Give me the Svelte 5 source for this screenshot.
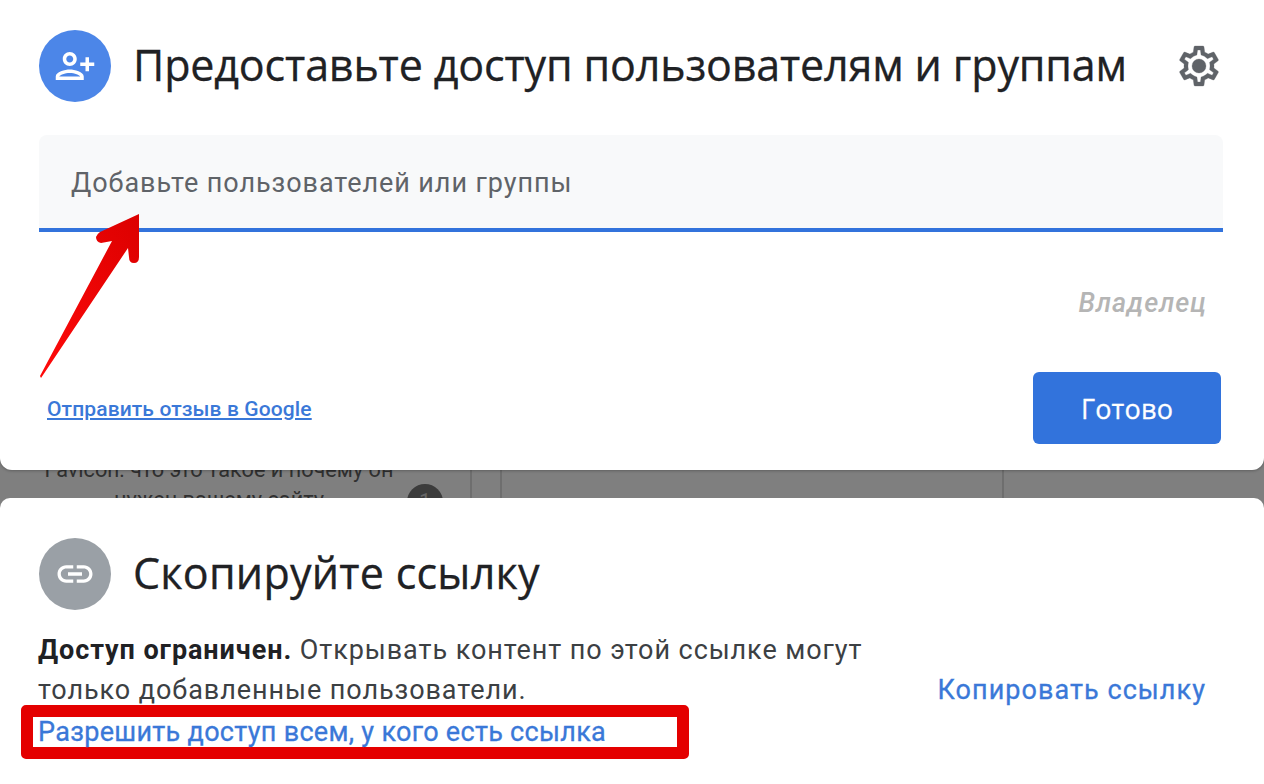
<script>
  const columns = [30, 502, 232];
</script>

<main class="page">
  <section class="card share">
    <header class="head">
      <span class="avatar blue">
        <svg class="person" viewBox="0 0 24 24" width="42" height="42"><path d="M15 12c2.21 0 4-1.79 4-4s-1.79-4-4-4-4 1.79-4 4 1.79 4 4 4zm0-6c1.1 0 2 .9 2 2s-.9 2-2 2-2-.9-2-2 .9-2 2-2zm0 8c-2.67 0-8 1.34-8 4v2h16v-2c0-2.66-5.33-4-8-4zm-6 4c.22-.72 3.31-2 6-2 2.7 0 5.8 1.29 6 2H9zm-3-3v-3h3v-2H6V7H4v3H1v2h3v3h2z" /></svg>
      </span>
      <h1>Предоставьте доступ пользователям и группам</h1>
      <svg class="gear" viewBox="0 0 24 24" width="48" height="48">
        <path d="M19.43 12.98c.04-.32.07-.64.07-.98 0-.34-.03-.66-.07-.98l2.11-1.65c.19-.15.24-.42.12-.64l-2-3.46c-.09-.16-.26-.25-.44-.25-.06 0-.12.01-.17.03l-2.49 1c-.52-.4-1.08-.73-1.69-.98l-.38-2.65C14.46 2.18 14.25 2 14 2h-4c-.25 0-.46.18-.49.42l-.38 2.65c-.61.25-1.17.59-1.69.98l-2.49-1c-.06-.02-.12-.03-.18-.03-.17 0-.34.09-.43.25l-2 3.46c-.13.22-.07.49.12.64l2.11 1.65c-.04.32-.07.65-.07.98 0 .33.03.66.07.98l-2.11 1.65c-.19.15-.24.42-.12.64l2 3.46c.09.16.26.25.44.25.06 0 .12-.01.17-.03l2.49-1c.52.4 1.08.73 1.69.98l.38 2.65c.03.24.24.42.49.42h4c.25 0 .46-.18.49-.42l.38-2.65c.61-.25 1.17-.59 1.69-.98l2.49 1c.06.02.12.03.18.03.17 0 .34-.09.43-.25l2-3.46c.12-.22.07-.49-.12-.64l-2.11-1.65zm-1.98-1.71c.04.31.05.52.05.73 0 .21-.02.43-.05.73l-.14 1.13.89.7 1.08.84-.7 1.21-1.27-.51-1.04-.42-.9.68c-.43.32-.84.56-1.25.73l-1.06.43-.16 1.13-.2 1.35h-1.4l-.19-1.35-.16-1.13-1.06-.43c-.43-.18-.83-.41-1.23-.71l-.91-.7-1.06.43-1.27.51-.7-1.21 1.08-.84.89-.7-.14-1.13c-.03-.31-.05-.54-.05-.74s.02-.43.05-.73l.14-1.13-.89-.7-1.08-.84.7-1.21 1.27.51 1.04.42.9-.68c.43-.32.84-.56 1.25-.73l1.06-.43.16-1.13.2-1.35h1.39l.19 1.35.16 1.13 1.06.43c.43.18.83.41 1.23.71l.91.7 1.06-.43 1.27-.51.7 1.21-1.07.85-.89.7.14 1.13z" />
        <circle cx="12" cy="12" r="3.5" />
      </svg>
    </header>

    <div class="field">Добавьте пользователей или группы</div>
    <div class="owner">Владелец</div>

    <footer class="foot">
      <a href="#feedback" class="feedback">Отправить отзыв в Google</a>
      <button class="done">Готово</button>
    </footer>

    <svg class="arrow" viewBox="0 0 120 180" width="120" height="180">
      <defs>
        <linearGradient id="red" x1="0" y1="1" x2="1" y2="0">
          <stop offset="0" stop-color="#ff0a0a" />
          <stop offset="1" stop-color="#dc0000" />
        </linearGradient>
      </defs>
      <path d="M100 4 L100 47 Q100 53 95 53 Q90 53 90 47 L89 38 L2 168 L1 166 L73 31 L62 33 Q57 32 57 27 Q58 24 61 22 Z" fill="url(#red)" />
    </svg>
  </section>

  <div class="behind">
    <div class="snippet">
      <p>Favicon: что это такое и почему он</p>
      <p>нужен вашему сайту</p>
      <span class="badge">1</span>
    </div>
    {#each columns as width}
      <div class="col" style="width: {width}px"></div>
    {/each}
  </div>

  <section class="card link">
    <header class="head">
      <span class="avatar grey">
        <svg viewBox="0 0 24 24" width="42" height="42"><path d="M3.9 12c0-1.71 1.39-3.1 3.1-3.1h4V7H7c-2.76 0-5 2.24-5 5s2.24 5 5 5h4v-1.9H7c-1.71 0-3.1-1.39-3.1-3.1zM8 13h8v-2H8v2zm9-6h-4v1.9h4c1.71 0 3.1 1.39 3.1 3.1s-1.39 3.1-3.1 3.1h-4V17h4c2.76 0 5-2.24 5-5s-2.24-5-5-5z" /></svg>
      </span>
      <h1>Скопируйте ссылку</h1>
    </header>

    <div class="body">
      <p class="note"><b>Доступ ограничен.</b> Открывать контент по этой ссылке могут только добавленные пользователи.</p>
      <a href="#copy" class="copy">Копировать ссылку</a>
    </div>

    <div class="mark">
      <a href="#allow">Разрешить доступ всем, у кого есть ссылка</a>
    </div>
  </section>
</main>

<style>
  :global(body) {
    margin: 0;
    background: #fff;
  }

  .page {
    width: 1264px;
    height: 784px;
    overflow: hidden;
    background: #7f7f7f;
    font-family: Roboto, "Liberation Sans", sans-serif;
    color: #3c4043;
  }

  .card {
    position: relative;
    z-index: 1;
    background: #fff;
  }

  .share {
    height: 470px;
    box-sizing: border-box;
    padding: 30px 41px 0 39px;
    border-radius: 0 0 12px 12px;
    box-shadow: 0 1px 3px rgba(0, 0, 0, 0.25);
  }

  .link {
    height: 286px;
    box-sizing: border-box;
    padding: 40px 0 0 39px;
    border-radius: 10px 10px 0 0;
  }

  .head {
    display: flex;
    align-items: center;
    gap: 22px;
  }

  .avatar {
    display: flex;
    align-items: center;
    justify-content: center;
    flex: none;
    width: 72px;
    height: 72px;
    border-radius: 50%;
    fill: #fff;
  }

  .blue {
    background: #4c86e8;
  }

  .grey {
    background: #9aa0a6;
  }

  .person {
    transform: scaleX(-1);
  }

  h1 {
    margin: 0;
    padding-bottom: 3px;
    font-family: "Open Sans", Roboto, sans-serif;
    font-size: 43px;
    font-weight: 400;
    line-height: 69px;
    letter-spacing: -0.15px;
    color: #202124;
    white-space: nowrap;
    -webkit-text-stroke: 0.3px #202124;
  }

  .link h1 {
    letter-spacing: 0.25px;
  }

  .gear {
    margin-left: auto;
    margin-right: 0;
    fill: #5f6368;
    stroke: #5f6368;
    stroke-width: 0.15;
  }

  .field {
    height: 97px;
    box-sizing: border-box;
    margin-top: 33px;
    padding: 30px 32px 0;
    border-bottom: 4px solid #3273dc;
    border-radius: 8px 8px 0 0;
    background: #f8f9fa;
    font-size: 27px;
    line-height: 36px;
    letter-spacing: 0.93px;
    color: #5f6368;
  }

  .owner {
    margin-top: 53px;
    padding-right: 16px;
    text-align: right;
    font-size: 27px;
    line-height: 36px;
    font-style: italic;
    font-weight: 500;
    letter-spacing: 1px;
    color: #b5b5b5;
  }

  .foot {
    display: flex;
    align-items: flex-end;
    justify-content: space-between;
    margin-top: 51px;
    padding: 0 2px 0 8px;
  }

  .feedback {
    margin-bottom: 22px;
    font-size: 21px;
    line-height: 26px;
    font-weight: 500;
    letter-spacing: 0.12px;
    color: #3a78d8;
  }

  .done {
    width: 188px;
    height: 72px;
    padding: 0;
    border: 0;
    border-radius: 6px;
    background: #3273dc;
    font-family: "Open Sans", Roboto, sans-serif;
    font-size: 27px;
    letter-spacing: 0.2px;
    color: #fff;
    -webkit-text-stroke: 0.3px #fff;
  }

  .arrow {
    position: absolute;
    left: 39px;
    top: 210px;
  }

  .behind {
    display: flex;
    height: 28px;
    overflow: hidden;
    background: #7f7f7f;
  }

  .snippet {
    position: relative;
    flex: none;
    width: 470px;
    margin-top: -15px;
    font-size: 21.7px;
    line-height: 30px;
    color: #303030;
  }

  .snippet p {
    width: 438px;
    margin: 0;
    text-align: center;
  }

  .badge {
    position: absolute;
    left: 407px;
    top: 29px;
    width: 36px;
    height: 36px;
    border-radius: 50%;
    background: #3c3c3c;
    color: #666;
    text-align: center;
    line-height: 36px;
  }

  .col {
    flex: none;
    box-sizing: border-box;
    border-left: 2px solid #6e6e6e;
  }

  .body {
    display: flex;
    align-items: flex-end;
    justify-content: space-between;
    padding-right: 58px;
    margin: 20px 0 -5px -1px;
  }

  .note {
    width: 850px;
    margin: 0;
    font-size: 27px;
    line-height: 40px;
    letter-spacing: 0.93px;
    color: #3c4043;
  }

  .note b {
    font-weight: 700;
    color: #202124;
  }

  .copy {
    font-size: 27px;
    line-height: 40px;
    letter-spacing: 1.05px;
    color: #3a78d8;
    -webkit-text-stroke: 0.3px #3a78d8;
    text-decoration: none;
  }

  .mark {
    width: 644px;
    height: 30px;
    margin: 0 0 0 -18px;
    border: 12px solid #e40000;
    border-radius: 5px;
    background: #fff;
  }

  .mark a {
    display: block;
    padding-left: 5px;
    font-size: 27px;
    line-height: 30px;
    letter-spacing: 0.3px;
    color: #3a78d8;
    -webkit-text-stroke: 0.3px #3a78d8;
    text-decoration: none;
    white-space: nowrap;
  }
</style>
